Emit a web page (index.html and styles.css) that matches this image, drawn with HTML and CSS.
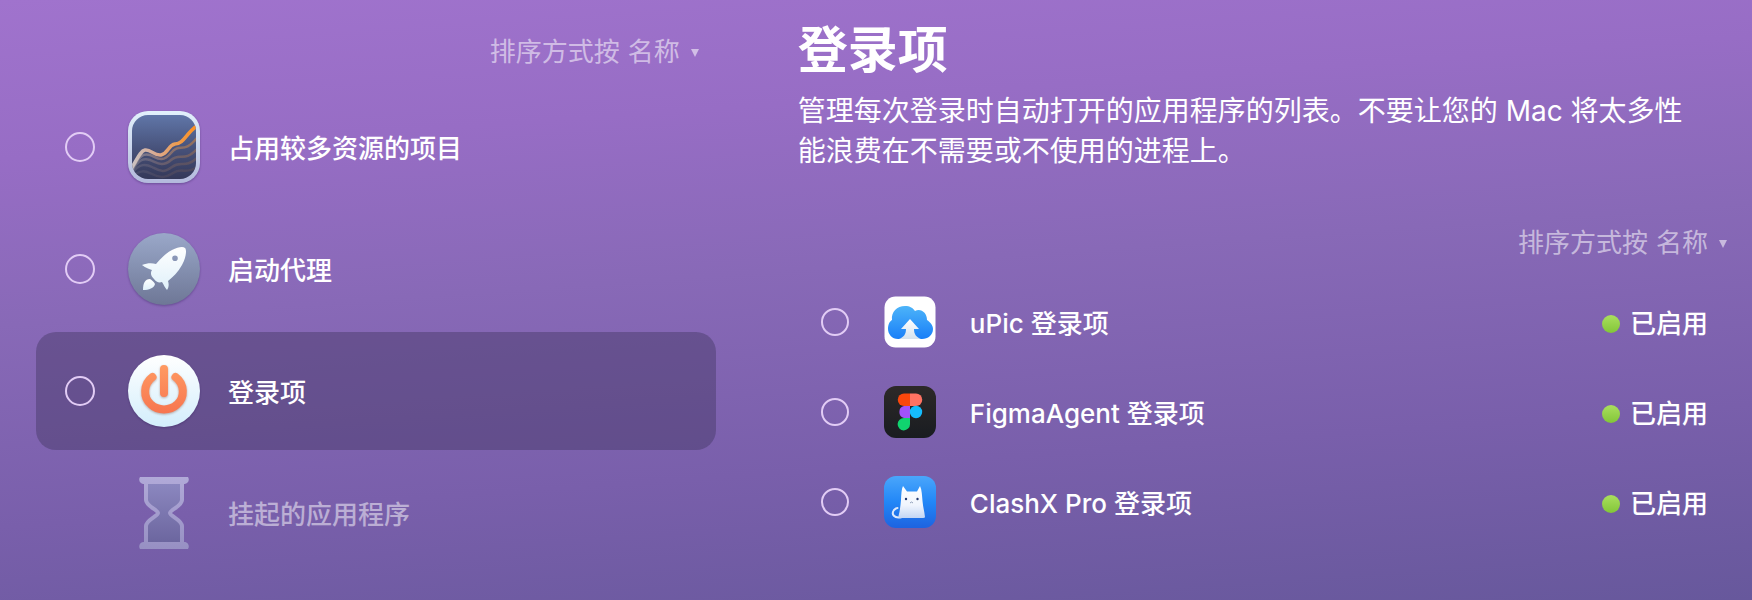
FILE: index.html
```html
<!DOCTYPE html>
<html lang="zh-CN">
<head>
<meta charset="utf-8">
<meta name="viewport" content="width=device-width, initial-scale=1">
<title>登录项</title>
<link rel="stylesheet" href="styles.css">
</head>
<body>
<main class="layout">
  <section class="categories">
    <div class="sort">
      <label for="sort-categories">排序方式按</label>
      <select id="sort-categories" class="sort-select"><option>名称</option></select>
      <span class="sort-arrow" aria-hidden="true"></span>
    </div>
    <ul class="category-list">
      <li class="category">
        <input class="check" type="checkbox" id="cat-heavy">
        <svg class="category-icon" viewBox="0 0 72 72" aria-hidden="true">
          <defs>
            <linearGradient id="heavy-rim" x1="0" y1="0" x2="0" y2="1"><stop offset="0" stop-color="#e2f1fc"/><stop offset="1" stop-color="#b3b9dc"/></linearGradient>
            <linearGradient id="heavy-bg" x1="0" y1="0" x2="0" y2="1"><stop offset="0" stop-color="#6076a8"/><stop offset=".55" stop-color="#465078"/><stop offset="1" stop-color="#343859"/></linearGradient>
            <linearGradient id="heavy-line" x1="0" y1="0" x2="1" y2="0"><stop offset="0" stop-color="#c9c3c5"/><stop offset=".4" stop-color="#dca98d"/><stop offset=".75" stop-color="#f19a46"/><stop offset="1" stop-color="#ff9020"/></linearGradient>
            <clipPath id="heavy-clip"><rect x="4" y="4" width="64" height="64" rx="16"/></clipPath>
          </defs>
          <rect width="72" height="72" rx="20" fill="url(#heavy-rim)"/>
          <rect x="4" y="4" width="64" height="64" rx="16" fill="url(#heavy-bg)"/>
          <g clip-path="url(#heavy-clip)" fill="none" stroke="url(#heavy-line)" stroke-width="2.5">
            <path opacity=".1" d="M4 66C12 58 18 60 24 63S36 68 45 62S58 64 69 56"/>
            <path opacity=".16" d="M4 62C12 52 18 53 24 56S35 63 44 56S57 58 69 47"/>
            <path opacity=".25" d="M4 60C11 48 16 47 22 49S34 57 43 49S56 52 69 38"/>
            <path opacity=".4" d="M4 59C11 44 16 42 22 44S34 53 43 42S55 44 69 27"/>
            <path stroke-width="3.5" d="M3 58C9 49 12 40 17 39C23 38 26 45 33 44C41 42 40 34 47 33C56 33 58 22 69 15"/>
          </g>
        </svg>
        <label class="category-name" for="cat-heavy">占用较多资源的项目</label>
      </li>
      <li class="category">
        <input class="check" type="checkbox" id="cat-agents">
        <svg class="category-icon" viewBox="0 0 72 72" aria-hidden="true">
          <defs>
            <linearGradient id="agent-bg" x1="0" y1="0" x2="0" y2="1"><stop offset="0" stop-color="#9aa8c9"/><stop offset="1" stop-color="#6e7796"/></linearGradient>
            <linearGradient id="agent-ship" x1="0" y1="0" x2="0" y2="1"><stop offset="0" stop-color="#fff"/><stop offset="1" stop-color="#dff0fa"/></linearGradient>
          </defs>
          <circle cx="36" cy="36" r="36" fill="url(#agent-bg)"/>
          <g fill="url(#agent-ship)">
            <path fill-rule="evenodd" d="M57 15C59 17 58 25 54 32C50 39 45 44 40 48C41 51 41 54 39 57C37 55 36 52 34 49C31 50 28 49 26 46C23 43 22 40 24 37C21 36 18 35 14 32C19 30 24 30 28 31C33 25 38 20 44 17C50 14 55 13 57 15ZM47 22.5A2.8 2.8 0 1 0 47 28.100A2.8 2.8 0 0 0 47 22.5Z"/>
            <path d="M15 57C15 50 17 46 22 46C24 47 26 49 27 51C26 55 21 57 15 57Z"/>
          </g>
        </svg>
        <label class="category-name" for="cat-agents">启动代理</label>
      </li>
      <li class="category category-selected">
        <input class="check" type="checkbox" id="cat-login">
        <svg class="category-icon" viewBox="0 0 72 72" aria-hidden="true">
          <defs>
            <linearGradient id="power-bg" x1="0" y1="0" x2="0" y2="1"><stop offset="0" stop-color="#fff"/><stop offset="1" stop-color="#d3eefc"/></linearGradient>
            <linearGradient id="power-ink" gradientUnits="userSpaceOnUse" x1="0" y1="10" x2="0" y2="58"><stop offset="0" stop-color="#ff9a62"/><stop offset="1" stop-color="#f77650"/></linearGradient>
          </defs>
          <circle cx="36" cy="36" r="36" fill="url(#power-bg)"/>
          <g class="power-mark" fill="none" stroke="url(#power-ink)" stroke-width="8" stroke-linecap="round">
            <path d="M24.500 22C15 29 15 43 23 49.500C30 56 42 56 49 49.500C57 43 57 29 47.500 22"/>
            <path d="M36 14L36.010 38"/>
          </g>
        </svg>
        <label class="category-name" for="cat-login">登录项</label>
      </li>
      <li class="category category-disabled">
        <span class="check-space"></span>
        <svg class="category-icon" viewBox="0 0 72 72" aria-hidden="true">
          <defs>
            <linearGradient id="glass-fill" x1="0" y1="0" x2="0" y2="1"><stop offset="0" stop-color="#8c88c0"/><stop offset="1" stop-color="#6b659e"/></linearGradient>
            <linearGradient id="glass-rim" gradientUnits="userSpaceOnUse" x1="0" y1="0" x2="0" y2="72"><stop offset="0" stop-color="#b1aad8"/><stop offset="1" stop-color="#9790c3"/></linearGradient>
          </defs>
          <path d="M18 5V24C18 30 29 32 29 36S18 43 18 49V67H54V49C54 43 43 40 43 36S54 30 54 24V5Z" fill="url(#glass-fill)"/>
          <path d="M18 5V23C18 29 30 33 30 36S18 43 18 49V67M54 5V23C54 29 42 33 42 36S54 43 54 49V67" fill="none" stroke="url(#glass-rim)" stroke-width="4"/>
          <path d="M12 0H60C62 3 60 7 56 7H16C12 7 10 3 12 0ZM16 65H56C60 65 62 69 60 72H12C10 69 12 65 16 65Z" fill="url(#glass-rim)"/>
        </svg>
        <span class="category-name">挂起的应用程序</span>
      </li>
    </ul>
  </section>

  <section class="details">
    <h1 class="title">登录项</h1>
    <p class="description">管理每次登录时自动打开的应用程序的列表。不要让您的 Mac 将太多性能浪费在不需要或不使用的进程上。</p>
    <div class="sort">
      <label for="sort-items">排序方式按</label>
      <select id="sort-items" class="sort-select"><option>名称</option></select>
      <span class="sort-arrow" aria-hidden="true"></span>
    </div>
    <ul class="item-list">
      <li class="item">
        <input class="check check-small" type="checkbox" id="item-upic">
        <svg class="item-icon" viewBox="0 0 52 52" aria-hidden="true">
          <defs>
            <linearGradient id="cloud" x1="0" y1="0" x2="0" y2="1"><stop offset="0" stop-color="#4db4f9"/><stop offset="1" stop-color="#197ff8"/></linearGradient>
            <linearGradient id="cloud-arrow" x1="0" y1="0" x2="0" y2="1"><stop offset="0" stop-color="#fff"/><stop offset="1" stop-color="#d5e2ee"/></linearGradient>
          </defs>
          <rect x=".5" y=".5" width="51" height="51" rx="11" fill="#fff"/>
          <path d="M14 43C8 43 4 38 4 33C4 28 6 25 8 24C7 16 13 10 21 10C26 10 29 12 31 15C37 12 43 17 43 24C46 26 49 29 49 33C49 39 44 43 38 43Z" fill="url(#cloud)"/>
          <path d="M26 23L35 33H30C30 38 32 41 37 43H15C20 41 22 38 22 33H17Z" fill="url(#cloud-arrow)"/>
        </svg>
        <label class="item-name" for="item-upic">uPic 登录项</label>
        <span class="status"><span class="status-text">已启用</span></span>
      </li>
      <li class="item">
        <input class="check check-small" type="checkbox" id="item-figma">
        <svg class="item-icon" viewBox="0 0 52 52" aria-hidden="true">
          <defs><linearGradient id="figma-bg" x1="0" y1="0" x2="0" y2="1"><stop offset="0" stop-color="#2d2928"/><stop offset="1" stop-color="#191c21"/></linearGradient></defs>
          <rect width="52" height="52" rx="12" fill="url(#figma-bg)"/>
          <path d="M26 7.500H20A6.200 6.200 0 0 0 20 20H26Z" fill="#f9470c"/>
          <path d="M26 7.500H32A6.200 6.200 0 0 1 32 20H26Z" fill="#ff7262"/>
          <path d="M26 20H20A6.200 6.200 0 0 0 20 32H26Z" fill="#a252fb"/>
          <circle cx="32" cy="26" r="6.200" fill="#15bcfc"/>
          <path d="M26 32H20A6.200 6.200 0 1 0 26 38.200Z" fill="#10d36f"/>
        </svg>
        <label class="item-name" for="item-figma">FigmaAgent 登录项</label>
        <span class="status"><span class="status-text">已启用</span></span>
      </li>
      <li class="item">
        <input class="check check-small" type="checkbox" id="item-clash">
        <svg class="item-icon" viewBox="0 0 52 52" aria-hidden="true">
          <defs>
            <linearGradient id="clash-bg" x1="0" y1="0" x2="0" y2="1"><stop offset="0" stop-color="#4aa6fb"/><stop offset=".5" stop-color="#2287f7"/><stop offset="1" stop-color="#1d63e0"/></linearGradient>
            <linearGradient id="cat-fur" x1="0" y1="0" x2="0" y2="1"><stop offset="0" stop-color="#fff"/><stop offset=".6" stop-color="#f0f5fd"/><stop offset="1" stop-color="#c3d6f4"/></linearGradient>
          </defs>
          <rect width="52" height="52" rx="12" fill="url(#clash-bg)"/>
          <path d="M18 41C10 43 7 38 10 34C11 33 12 32 13.500 32" fill="none" stroke="#dce9fc" stroke-width="2" stroke-linecap="round"/>
          <path d="M19 10L23 15.500H33L36 10C38 14 38 20 38.500 25C39 31 40.500 36 41 41Q41 42 39 42H16Q14 42 14.500 40C16 35 16.500 29 17 24C17.300 18 17.500 13 19 10Z" fill="url(#cat-fur)"/>
          <circle cx="22" cy="23" r="1.200" fill="#243b72"/><circle cx="33.500" cy="23" r="1.200" fill="#243b72"/>
          <path d="M26 27L27.500 26L29 27" fill="none" stroke="#788aa8" stroke-width=".8"/>
        </svg>
        <label class="item-name" for="item-clash">ClashX Pro 登录项</label>
        <span class="status"><span class="status-text">已启用</span></span>
      </li>
    </ul>
  </section>
</main>
</body>
</html>
```
FILE: styles.css
```css
* {
  box-sizing: border-box;
}

body {
  margin: 0;
  min-height: 100vh;
  background: linear-gradient(176deg, #a073cd 0%, #976dc5 22%, #8869b7 45%, #795fab 73%, #67589c 100%);
  color: #fff;
  font-family: Inter, "Noto Sans CJK SC", sans-serif;
  font-size: 26px;
  line-height: 40px;
}

.layout {
  display: grid;
  grid-template-columns: 3fr 4fr;
}

.categories {
  padding: 32px 35px 24px 36px;
}

.details {
  padding: 14px 24px 24px 47px;
}

.sort {
  display: flex;
  align-items: center;
  justify-content: flex-end;
  color: rgba(255, 255, 255, 0.55);
}

.categories .sort {
  padding-right: 17px;
}

.details .sort {
  padding-right: 1px;
}

.sort-select {
  appearance: none;
  margin: 0 0 0 8px;
  padding: 0;
  border: 0;
  background: none;
  color: inherit;
  font: inherit;
}

.sort-arrow {
  margin: 2px 0 0 10px;
  border: 4px solid transparent;
  border-top: 8px solid currentColor;
  border-bottom: 0;
}

.category-list,
.item-list {
  margin: 0;
  padding: 0;
  list-style: none;
}

.category-list {
  display: grid;
  gap: 4px;
  margin-top: 16px;
}

.category {
  display: flex;
  align-items: center;
  height: 118px;
  padding: 0 29px;
  border-radius: 20px;
  font-weight: 500;
}

.category-selected {
  background: rgba(60, 50, 90, 0.4);
}

.category-disabled {
  color: rgba(255, 255, 255, 0.5);
}

.category-name,
.item-name,
.status-text {
  padding-top: 4px;
}

.check {
  appearance: none;
  flex: none;
  width: 30px;
  height: 30px;
  margin: 0;
  border: 2px solid #e2ccf5;
  border-radius: 50%;
}

.check:checked {
  background: #e2ccf5;
}

.check-small {
  width: 28px;
  height: 28px;
}

.check-space {
  width: 30px;
}

.category-icon {
  flex: none;
  width: 72px;
  height: 72px;
  margin: 0 28px 0 33px;
  overflow: visible;
  filter: drop-shadow(0 1px 1px rgba(50, 30, 90, 0.4));
}

.category-disabled .category-icon {
  filter: none;
}

.power-mark {
  filter: drop-shadow(0 1px 1px rgba(120, 60, 40, 0.4));
}

.title {
  margin: 0;
  font-size: 50px;
  font-weight: 700;
  line-height: 72px;
}

.description {
  margin: 5px 34px 52px 0;
  font-size: 28px;
  line-height: 40px;
}

.item-list {
  margin-top: 14px;
}

.item {
  display: flex;
  align-items: center;
  height: 90px;
  padding: 0 20px 0 23px;
  font-weight: 500;
}

.item-icon {
  flex: none;
  width: 52px;
  height: 52px;
  margin: 0 34px 0 35px;
}

.item-name {
  flex: 1;
}

.status {
  display: flex;
  align-items: center;
  gap: 10px;
}

.status::before {
  content: "";
  width: 18px;
  height: 18px;
  margin-top: 4px;
  border-radius: 50%;
  background: linear-gradient(#aadf5e, #82c638);
}
```
